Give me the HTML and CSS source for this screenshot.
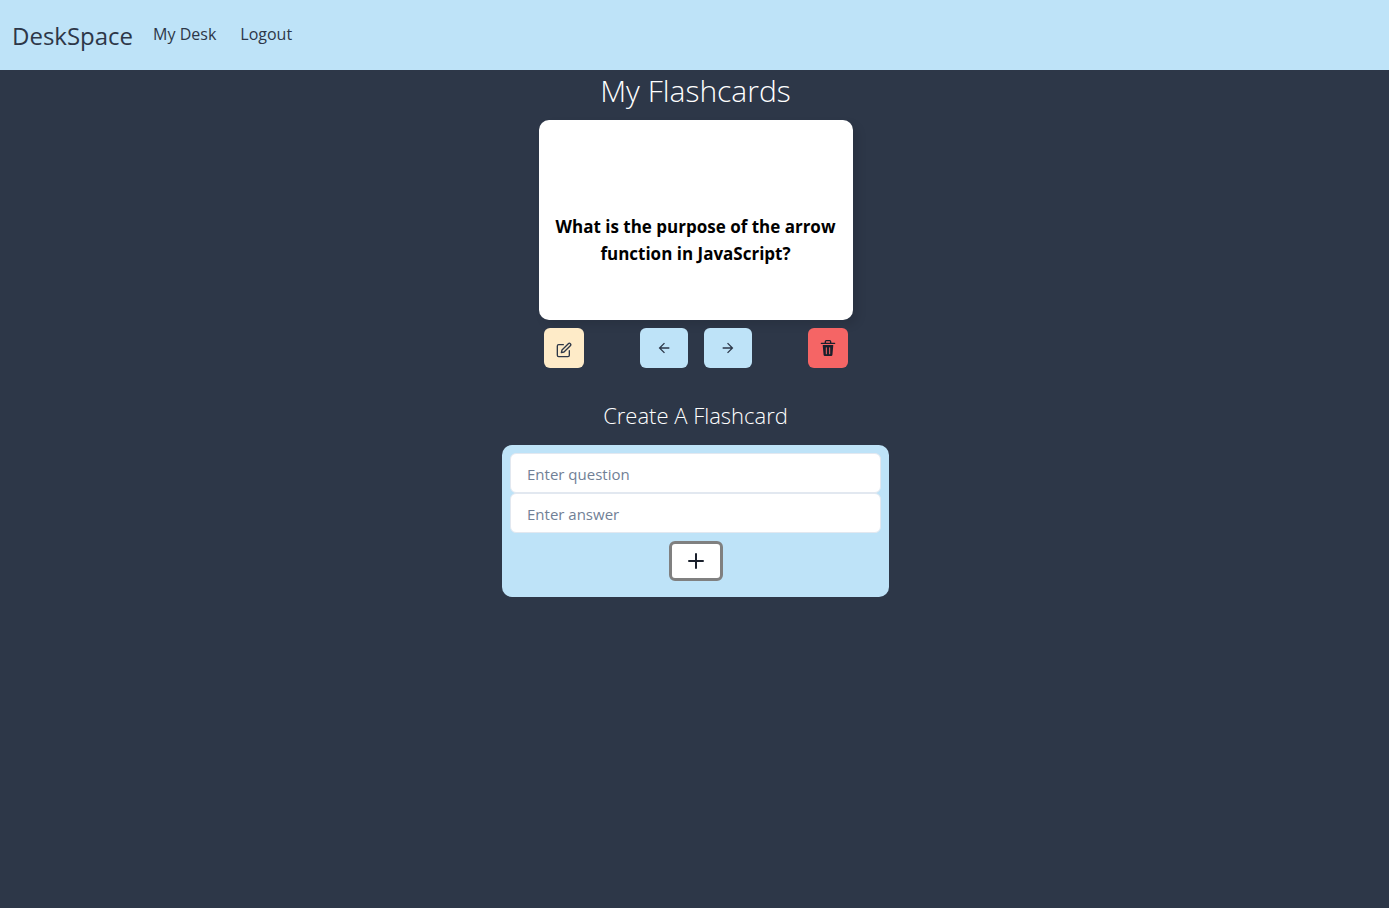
FILE: index.html
```html
<!DOCTYPE html>
<html lang="en">
<head>
  <meta charset="utf-8">
  <meta name="viewport" content="width=device-width, initial-scale=1">
  <title>DeskSpace</title>
  <link rel="stylesheet" href="styles.css">
</head>
<body>
  <header class="navbar">
    <a class="brand" href="#">DeskSpace</a>
    <nav class="nav-links">
      <a class="nav-link" href="#">My Desk</a>
      <a class="nav-link" href="#">Logout</a>
    </nav>
  </header>
  <main class="page">
    <h1 class="title">My Flashcards</h1>
    <article class="card">
      <p class="question">What is the purpose of the arrow function in JavaScript?</p>
    </article>
    <div class="actions">
      <button class="btn btn-edit" type="button" aria-label="Edit">
        <svg class="icon" viewBox="0 0 24 24" fill="none" stroke="currentColor" stroke-width="2" stroke-linecap="round" stroke-linejoin="round"><path d="M11 4H4a2 2 0 0 0-2 2v14a2 2 0 0 0 2 2h14a2 2 0 0 0 2-2v-7"/><path d="M18.5 2.5a2.121 2.121 0 0 1 3 3L12 15l-4 1 1-4 9.5-9.5z"/></svg>
      </button>
      <div class="pager">
        <button class="btn btn-page" type="button" aria-label="Previous">
          <svg class="icon" viewBox="0 0 24 24" fill="currentColor"><path d="M20 11H7.83l5.59-5.59L12 4l-8 8 8 8 1.41-1.41L7.83 13H20v-2z"/></svg>
        </button>
        <button class="btn btn-page" type="button" aria-label="Next">
          <svg class="icon" viewBox="0 0 24 24" fill="currentColor"><path d="M12 4l-1.41 1.41L16.17 11H4v2h12.17l-5.58 5.59L12 20l8-8z"/></svg>
        </button>
      </div>
      <button class="btn btn-delete" type="button" aria-label="Delete">
        <svg class="icon" viewBox="0 0 24 24" fill="currentColor"><path d="M19.452 7.5H4.547a.5.5 0 0 0-.5.545l1.287 14.136A2 2 0 0 0 7.326 24h9.347a2 2 0 0 0 1.992-1.819L19.95 8.045a.5.5 0 0 0-.498-.545zm-9.2 13a.75.75 0 0 1-1.5 0v-9a.75.75 0 0 1 1.5 0zm5 0a.75.75 0 0 1-1.5 0v-9a.75.75 0 0 1 1.5 0zM22 4h-4.75a.25.25 0 0 1-.25-.25V2.5A2.5 2.5 0 0 0 14.5 0h-5A2.5 2.5 0 0 0 7 2.5v1.25a.25.25 0 0 1-.25.25H2a1 1 0 0 0 0 2h20a1 1 0 0 0 0-2zM9 3.75V2.5a.5.5 0 0 1 .5-.5h5a.5.5 0 0 1 .5.5v1.25a.25.25 0 0 1-.25.25h-5.5A.25.25 0 0 1 9 3.75z"/></svg>
      </button>
    </div>
    <h2 class="subtitle">Create A Flashcard</h2>
    <form class="form">
      <input class="field" type="text" aria-label="Question" placeholder="Enter question">
      <input class="field" type="text" aria-label="Answer" placeholder="Enter answer">
      <button class="btn btn-add" type="button" aria-label="Add flashcard">
        <svg class="icon" viewBox="0 0 24 24" fill="currentColor"><path d="M0,12a1.5,1.5,0,0,0,1.5,1.5h8.75a.25.25,0,0,1,.25.25V22.5a1.5,1.5,0,1,0,3,0V13.75a.25.25,0,0,1,.25-.25H22.5a1.5,1.5,0,0,0,0-3H13.75a.25.25,0,0,1-.25-.25V1.5a1.5,1.5,0,0,0-3,0v8.75a.25.25,0,0,1-.25.25H1.5A1.5,1.5,0,0,0,0,12Z"/></svg>
      </button>
    </form>
  </main>
</body>
</html>
```

FILE: styles.css
```css
* {
  box-sizing: border-box;
  margin: 0;
}

body {
  min-height: 100vh;
  background: #2d3748;
  color: #fff;
  font-family: "Open Sans", "Noto Sans", sans-serif;
  font-size: 16px;
  line-height: 24px;
}

.navbar {
  display: flex;
  align-items: center;
  gap: 20px;
  min-height: 70px;
  padding: 0 12px;
  background: #bee3f8;
}

.brand,
.nav-link {
  color: #2d3748;
  text-decoration: none;
}

.brand {
  padding-top: 2px;
  font-size: 24px;
  font-weight: 400;
  line-height: 40px;
}

.nav-links {
  display: flex;
  gap: 24px;
  padding-bottom: 2px;
}

.nav-link {
  font-size: 16px;
  font-weight: 500;
}

.page {
  display: flex;
  flex-direction: column;
  align-items: center;
  padding-left: 2px;
}

.title {
  font-size: 30px;
  font-weight: 300;
  line-height: 42px;
  margin-bottom: 8px;
}

.card {
  display: flex;
  align-items: center;
  justify-content: center;
  width: 314px;
  max-width: 100%;
  min-height: 200px;
  padding: 40px 12px 0;
  border-radius: 10px;
  background: #fff;
  box-shadow: 5px 5px 10px rgba(0, 0, 0, 0.1);
}

.question {
  color: #000;
  font-size: 17px;
  font-weight: 700;
  line-height: 27px;
  text-align: center;
}

.actions {
  display: flex;
  gap: 56px;
  margin-top: 8px;
}

.pager {
  display: flex;
  gap: 16px;
}

.btn {
  display: flex;
  align-items: center;
  justify-content: center;
  height: 40px;
  padding: 0;
  border: 0;
  border-radius: 6px;
  color: #2d3748;
}

.btn-edit {
  width: 40px;
  padding-top: 4px;
  background: #feebc8;
}

.btn-page {
  width: 48px;
  background: #bee3f8;
}

.btn-delete {
  width: 40px;
  background: #f56565;
  color: #1a202c;
}

.btn-add {
  align-self: center;
  width: 54px;
  margin-top: 8px;
  border: 3px solid #808080;
  background: #fff;
  color: #1a202c;
}

.icon {
  width: 16px;
  height: 16px;
}

.subtitle {
  margin: 32px 0 15px;
  font-size: 22px;
  font-weight: 300;
  line-height: 30px;
}

.form {
  display: flex;
  flex-direction: column;
  width: 387px;
  max-width: 100%;
  padding: 8px 8px 16px;
  border-radius: 10px;
  background: #bee3f8;
}

.field {
  width: 100%;
  height: 40px;
  padding: 2px 16px 0;
  border: 1px solid #e2e8f0;
  border-radius: 6px;
  background: #fff;
  color: #2d3748;
  font-family: inherit;
  font-size: 15px;
}

.field::placeholder {
  color: #718096;
  opacity: 1;
}
```
